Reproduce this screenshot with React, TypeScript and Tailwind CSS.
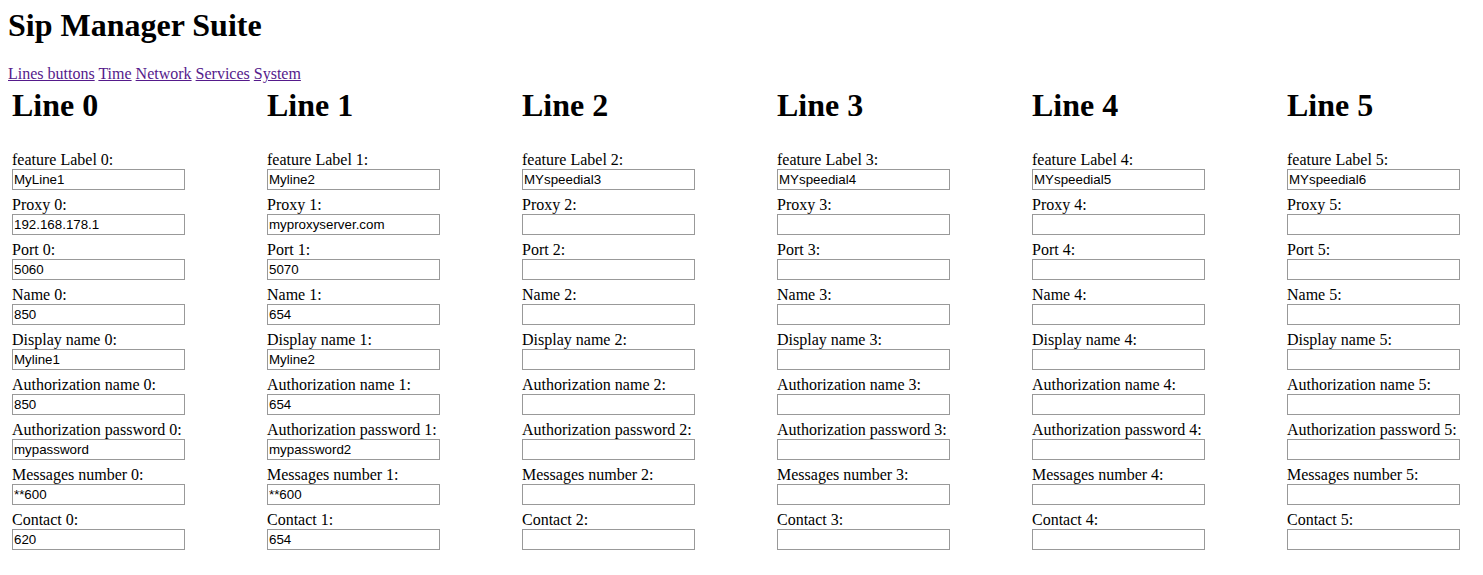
import React from "react";

type Line = {
  label: string;
  proxy: string;
  port: string;
  name: string;
  display: string;
  authName: string;
  authPass: string;
  messages: string;
  contact: string;
};

const lines: Line[] = [
  { label: "MyLine1", proxy: "192.168.178.1", port: "5060", name: "850", display: "Myline1", authName: "850", authPass: "mypassword", messages: "**600", contact: "620" },
  { label: "Myline2", proxy: "myproxyserver.com", port: "5070", name: "654", display: "Myline2", authName: "654", authPass: "mypassword2", messages: "**600", contact: "654" },
  { label: "MYspeedial3", proxy: "", port: "", name: "", display: "", authName: "", authPass: "", messages: "", contact: "" },
  { label: "MYspeedial4", proxy: "", port: "", name: "", display: "", authName: "", authPass: "", messages: "", contact: "" },
  { label: "MYspeedial5", proxy: "", port: "", name: "", display: "", authName: "", authPass: "", messages: "", contact: "" },
  { label: "MYspeedial6", proxy: "", port: "", name: "", display: "", authName: "", authPass: "", messages: "", contact: "" },
];

const navLinks = ["Lines buttons", "Time", "Network", "Services", "System"];

function Field({ label, value }: { label: string; value: string }) {
  return (
    <div className="flex flex-col mb-[6px]">
      <label className="text-[16px] leading-[18px]">{label}</label>
      <input
        type="text"
        defaultValue={value}
        className="w-[173px] h-[21px] border border-[#999] px-[1px] text-[13.33px] text-black outline-none"
        style={{ fontFamily: '"Liberation Sans", Arial, sans-serif' }}
      />
    </div>
  );
}

function LineColumn({ line, i }: { line: Line; i: number }) {
  return (
    <div className="w-[255px] shrink-0">
      <h2 className="text-[32px] leading-[36px] font-bold mb-[28px]">Line {i}</h2>
      <Field label={`feature Label ${i}:`} value={line.label} />
      <Field label={`Proxy ${i}:`} value={line.proxy} />
      <Field label={`Port ${i}:`} value={line.port} />
      <Field label={`Name ${i}:`} value={line.name} />
      <Field label={`Display name ${i}:`} value={line.display} />
      <Field label={`Authorization name ${i}:`} value={line.authName} />
      <Field label={`Authorization password ${i}:`} value={line.authPass} />
      <Field label={`Messages number ${i}:`} value={line.messages} />
      <Field label={`Contact ${i}:`} value={line.contact} />
    </div>
  );
}

export default function App() {
  return (
    <div
      className="min-h-screen bg-white text-black px-[8px] pt-[7px]"
      style={{ fontFamily: '"Liberation Serif", "Times New Roman", serif' }}
    >
      <h1 className="text-[32px] leading-[36px] font-bold">Sip Manager Suite</h1>
      <nav className="mt-[22px] text-[16px] leading-[18px]">
        {navLinks.map((l, i) => (
          <React.Fragment key={l}>
            <a href="#" className="text-[#551a8b] underline">{l}</a>
            {i < navLinks.length - 1 ? " " : ""}
          </React.Fragment>
        ))}
      </nav>
      <div className="flex pl-[4px] mt-[4px]">
        {lines.map((line, i) => (
          <LineColumn key={i} line={line} i={i} />
        ))}
      </div>
    </div>
  );
}
